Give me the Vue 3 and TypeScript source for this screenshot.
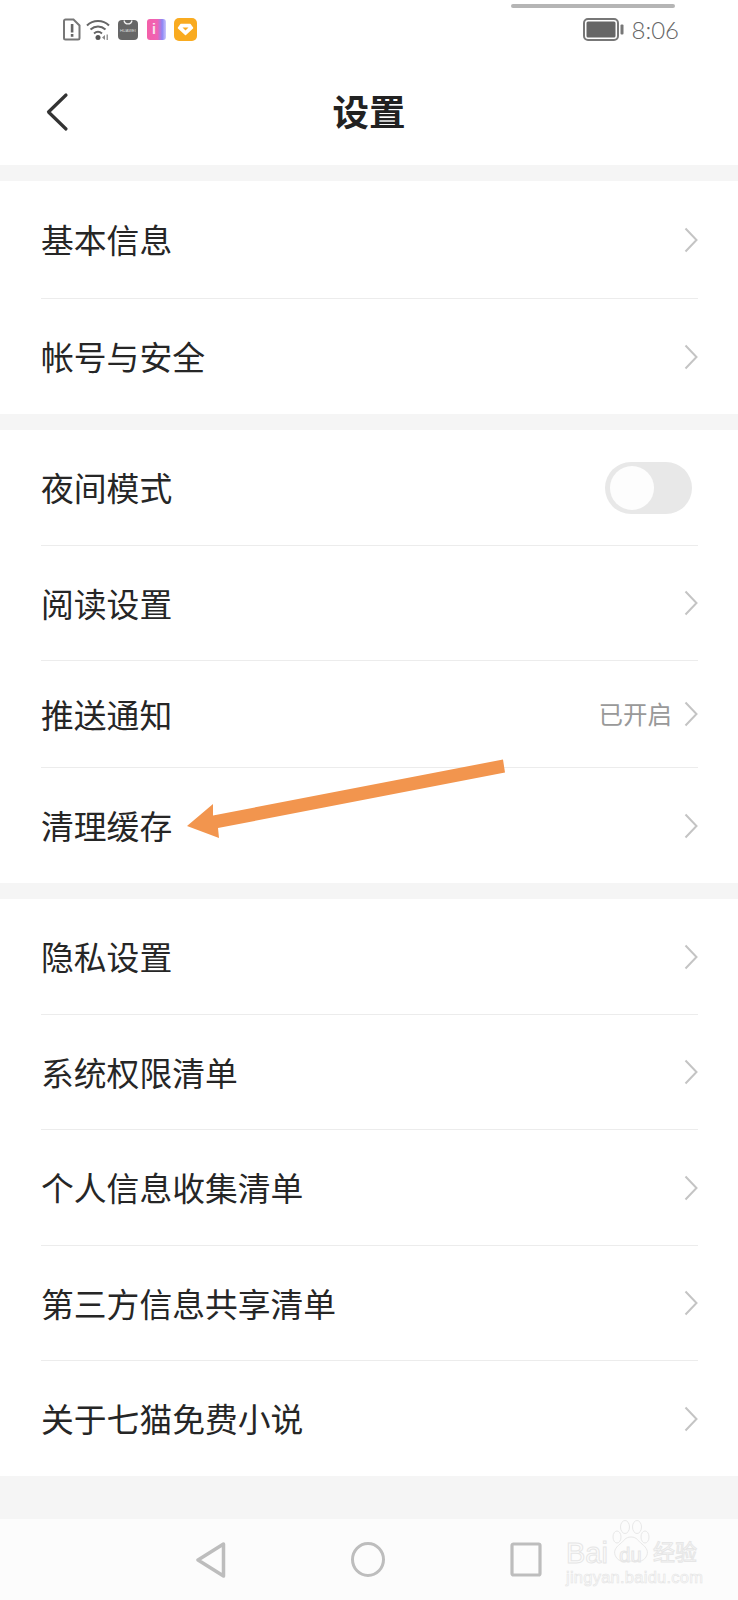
<template>
  <div class="page">
    <div class="status-bar">
      <div class="status-left">
        <svg class="ic-sim" width="18" height="23" viewBox="0 0 18 23">
          <path d="M2.500 1.500h8l6 6v12.500a1.500 1.500 0 0 1-1.500 1.500H2.500a1.500 1.500 0 0 1-1.500-1.500V3a1.500 1.500 0 0 1 1.500-1.500z" fill="none" stroke="#777" stroke-width="2" />
          <rect x="7.800" y="6" width="2.600" height="8.500" fill="#666" />
          <rect x="7.800" y="16" width="2.600" height="2.800" fill="#666" />
        </svg>
        <svg class="ic-wifi" width="26" height="22" viewBox="0 0 26 22">
          <path d="M1 6.500C7 .5 17 .5 23 6.500M4.500 10.500c4.500-4 10.500-4 15 0M8 14.500c2.700-2.300 5.300-2.300 8 0" fill="none" stroke="#666" stroke-width="2" />
          <circle cx="12" cy="18.500" r="2.500" fill="#555" />
          <path d="M16 18.500l3-2.500v5z" fill="#888" />
          <rect x="20.500" y="15.500" width="1.500" height="5.500" fill="#999" />
        </svg>
        <div class="ic-store">
          <svg width="12" height="6" viewBox="0 0 12 6"><path d="M2 .5c1 4.500 7 4.500 8 0" fill="none" stroke="#eee" stroke-width="1.300" /></svg>
          <span>HUAWEI</span>
        </div>
        <div class="ic-book">i</div>
        <div class="ic-gold">
          <svg width="17" height="13" viewBox="0 0 17 13">
            <path d="M4 1.500h9l2.500 3.500-7 6.500-7-6.500z" fill="#fff" stroke="#fff" stroke-width="1.500" stroke-linejoin="round" />
            <path d="M5.500 4.500h6l-3 3z" fill="#f9ab20" />
          </svg>
        </div>
      </div>
      <div class="status-right">
        <svg width="41" height="23" viewBox="0 0 41 23">
          <rect x="1" y="1" width="34" height="21" rx="4" fill="none" stroke="#777" stroke-width="2" />
          <rect x="3.500" y="3.500" width="29" height="16" rx="1.500" fill="#666" />
          <rect x="37.500" y="6.500" width="3" height="10" rx="1" fill="#777" />
        </svg>
        <span class="time">8:06</span>
      </div>
    </div>
    <div class="top-line"></div>

    <header class="nav">
      <svg class="back" width="24" height="40" viewBox="0 0 24 40">
        <path d="M21 3L3.500 20 21 37" fill="none" stroke="#333" stroke-width="3.200" stroke-linecap="round" stroke-linejoin="round" />
      </svg>
      <h1 class="title">设置</h1>
    </header>

    <section v-for="(group, i) in groups" :key="i" class="group">
      <div
        v-for="row in group"
        :key="row.label"
        class="row"
        :style="{ height: row.height + 'px' }"
      >
        <span class="label">{{ row.label }}</span>
        <span v-if="row.value" class="value">{{ row.value }}</span>
        <div v-if="row.toggle" class="toggle"><i class="knob"></i></div>
        <svg v-else class="chevron" width="14" height="26" viewBox="0 0 14 26">
          <path d="M1.500 1.500L12.500 13 1.500 24.500" fill="none" stroke="#c4c4c4" stroke-width="2" />
        </svg>
      </div>
    </section>

    <div class="gap"></div>

    <footer class="sys-nav">
      <svg width="30" height="36" viewBox="0 0 30 36">
        <path d="M27.500 2L2 18l25.500 16z" fill="none" stroke="#bdbdbd" stroke-width="3.500" stroke-linejoin="round" />
      </svg>
      <svg width="36" height="37" viewBox="0 0 36 37">
        <ellipse cx="18" cy="18.500" rx="15.500" ry="16" fill="none" stroke="#bdbdbd" stroke-width="3" />
      </svg>
      <svg width="32" height="36" viewBox="0 0 32 36">
        <rect x="2" y="2" width="28" height="31" rx="1.500" fill="none" stroke="#bdbdbd" stroke-width="3.200" />
      </svg>
    </footer>

    <div class="watermark">
      <svg class="paw" width="40" height="44" viewBox="0 0 40 44">
        <g fill="none" stroke="#e8e8e8" stroke-width="1">
          <ellipse cx="6" cy="17" rx="4" ry="6" />
          <ellipse cx="14" cy="7" rx="4.500" ry="6.500" />
          <ellipse cx="26" cy="7" rx="4.500" ry="6.500" />
          <ellipse cx="34" cy="17" rx="4" ry="6" />
          <path d="M20 17c6 0 7 4 11 7 5 4 7 8 4 13-3 5-9 5-15 4-6 1-12 1-15-4-3-5-1-9 4-13 4-3 5-7 11-7z" />
        </g>
      </svg>
      <div class="wm-main"><span>Bai</span><span class="wm-du">du</span><span class="wm-cn">经验</span></div>
      <div class="wm-sub">jingyan.baidu.com</div>
    </div>

    <svg class="arrow" width="738" height="1600" viewBox="0 0 738 1600">
      <path d="M503 759.500L505 772.500 218 828 219 838 187 826 213 804 213 815.500z" fill="#f2954e" />
    </svg>
  </div>
</template>

<script setup lang="ts">
interface SettingRow {
  label: string
  height: number
  value?: string
  toggle?: boolean
}

const groups: SettingRow[][] = [
  [
    { label: '基本信息', height: 118 },
    { label: '帐号与安全', height: 115 },
  ],
  [
    { label: '夜间模式', height: 116, toggle: true },
    { label: '阅读设置', height: 115 },
    { label: '推送通知', height: 107, value: '已开启' },
    { label: '清理缓存', height: 115 },
  ],
  [
    { label: '隐私设置', height: 116 },
    { label: '系统权限清单', height: 115 },
    { label: '个人信息收集清单', height: 116 },
    { label: '第三方信息共享清单', height: 115 },
    { label: '关于七猫免费小说', height: 115 },
  ],
]
</script>

<style>
html,
body {
  margin: 0;
  background: #fff;
}
</style>

<style scoped>
.page {
  position: relative;
  width: 738px;
  height: 1600px;
  overflow: hidden;
  background: #f5f5f5;
  font-family: "Noto Sans CJK SC", "Noto Sans", sans-serif;
  color: #262626;
}

.status-bar {
  height: 58px;
  background: #fff;
  display: flex;
  justify-content: space-between;
  align-items: flex-start;
  padding: 18px 59px 0 63px;
  box-sizing: border-box;
}

.status-left {
  display: flex;
  align-items: center;
}

.ic-wifi {
  margin-left: 5px;
}

.ic-store {
  width: 20px;
  height: 20px;
  margin-left: 6px;
  border-radius: 4px;
  background: #666;
  display: flex;
  flex-direction: column;
  align-items: center;
  overflow: hidden;
}

.ic-store span {
  font-size: 5px;
  line-height: 8px;
  color: #ddd;
  white-space: nowrap;
  transform: scale(0.8);
  font-family: "Liberation Sans", sans-serif;
}

.ic-book {
  width: 19px;
  height: 21px;
  margin-left: 9px;
  border-radius: 3px;
  background: linear-gradient(90deg, #f45fa8 0%, #ef63b5 55%, #8e86f5 80%, #c9c8fb 100%);
  color: #f8e6ee;
  font: bold 14px/21px "Liberation Sans", sans-serif;
  padding-left: 5px;
  box-sizing: border-box;
}

.ic-gold {
  width: 23px;
  height: 23px;
  margin-left: 8px;
  border-radius: 5px;
  background: #f9ab20;
  display: flex;
  align-items: center;
  justify-content: center;
}

.status-right {
  display: flex;
  align-items: center;
  gap: 7px;
}

.time {
  font-family: Lato, "Noto Sans", sans-serif;
  font-weight: 300;
  font-size: 24px;
  line-height: 23px;
  color: #666;
}

.top-line {
  position: absolute;
  left: 511px;
  top: 4px;
  width: 164px;
  height: 4px;
  border-radius: 2px;
  background: #b5b5b5;
}

.nav {
  height: 107px;
  padding-bottom: 1px;
  box-sizing: border-box;
  background: #fff;
  display: flex;
  align-items: center;
  justify-content: center;
  position: relative;
}

.back {
  position: absolute;
  left: 45px;
  top: 34px;
}

.title {
  margin: 0;
  font-size: 36.500px;
  font-weight: 700;
  color: #222;
  line-height: 1;
}

.group {
  margin-top: 16px;
  background: #fff;
}

.row {
  margin-left: 41px;
  margin-right: 40px;
  display: flex;
  align-items: center;
  box-sizing: border-box;
  border-bottom: 1px solid #ececec;
}

.row:last-child {
  border-bottom: none;
}

.label {
  flex: 1;
  font-size: 32.800px;
  line-height: 1;
}

.value {
  font-size: 24.500px;
  color: #999;
  margin-right: 12px;
  line-height: 1;
}

.chevron {
  flex: none;
}

.toggle {
  width: 87px;
  height: 52px;
  margin-right: 6px;
  border-radius: 26px;
  background: #e8e8e8;
  display: flex;
  align-items: center;
  padding-left: 5px;
  box-sizing: border-box;
}

.knob {
  width: 44px;
  height: 44px;
  border-radius: 50%;
  background: #fdfdfd;
}

.gap {
  height: 43px;
}

.sys-nav {
  height: 81px;
  background: #fcfcfc;
  display: flex;
  align-items: center;
  gap: 124px;
  padding: 0 0 0 196px;
  box-sizing: border-box;
}

.watermark {
  position: absolute;
  left: 566px;
  top: 1520px;
  width: 132px;
  height: 78px;
  color: #fff;
}

.paw {
  position: absolute;
  left: 45px;
  top: 0;
}

.wm-main {
  position: absolute;
  left: 0;
  top: 17px;
  display: flex;
  align-items: center;
  font: 29px/28px "Liberation Sans", "Noto Sans CJK SC", sans-serif;
  white-space: nowrap;
  color: transparent;
  -webkit-text-stroke: 1px #e6e6e6;
}

.wm-du {
  width: 45px;
  text-align: center;
  font-size: 20px;
  padding-top: 4px;
}

.wm-cn {
  font-size: 22px;
}

.wm-sub {
  position: absolute;
  left: 0;
  top: 49px;
  font: 16.500px/17px "Liberation Sans", sans-serif;
  letter-spacing: 0.250px;
  white-space: nowrap;
  color: transparent;
  -webkit-text-stroke: 0.600px #e4e4e4;
}

.arrow {
  position: absolute;
  left: 0;
  top: 0;
  pointer-events: none;
}
</style>
